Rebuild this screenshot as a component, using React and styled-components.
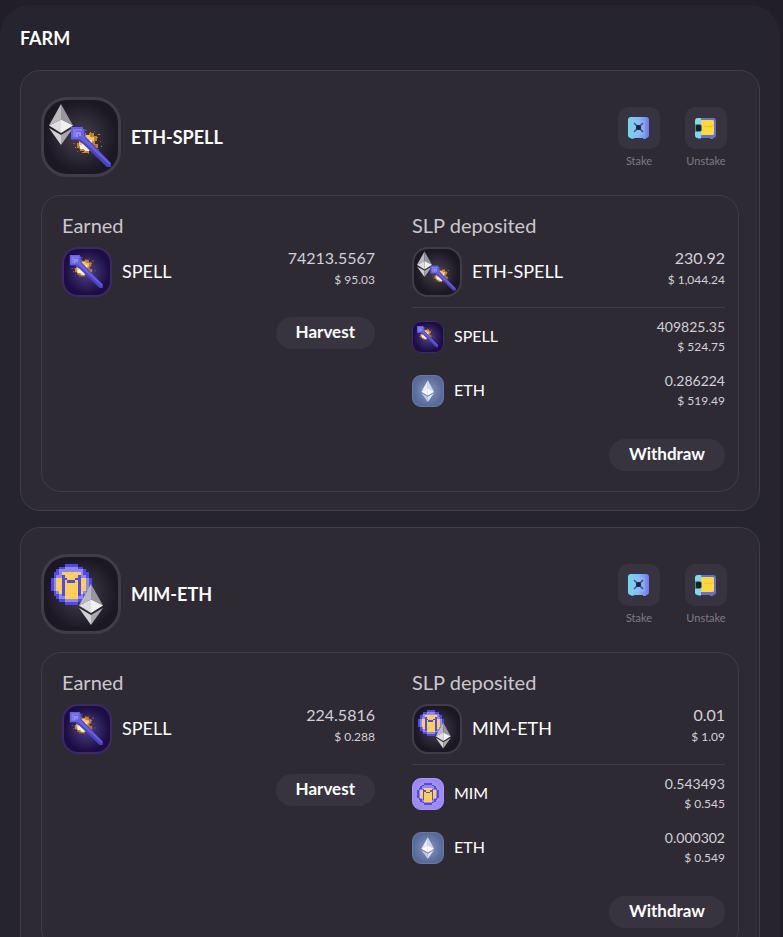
import React from "react";
import styled, { createGlobalStyle } from "styled-components";

const GlobalStyle = createGlobalStyle`
  *, *::before, *::after { box-sizing: border-box; }
  body {
    margin: 0;
    background: #211e28;
    color: #fff;
    font-family: Lato, "Noto Sans", sans-serif;
  }
  button { font: inherit; color: inherit; border: 0; cursor: pointer; }
  h1, h2, h3, ul { margin: 0; padding: 0; }
`;

const Panel = styled.main`
  margin: 5px 3px 0 0;
  padding: 20px;
  border-radius: 30px;
  background: #26242e;
`;

const PageTitle = styled.h1`
  font-size: 18px;
  line-height: 26px;
  font-weight: 700;
`;

const FarmList = styled.div`
  display: flex;
  flex-direction: column;
  gap: 16px;
  margin-top: 19px;
`;

const Card = styled.section`
  padding: 26px 20px 18px;
  border: 1px solid #403d48;
  border-radius: 20px;
  background: #2d2a34;
`;

const CardHeader = styled.header`
  display: flex;
  align-items: center;
  gap: 10px;
  padding-right: 12px;
  margin-bottom: 18px;
`;

const FarmName = styled.h2`
  flex: 1;
  font-size: 18px;
  line-height: 24px;
  font-weight: 700;
`;

const Actions = styled.div`
  display: flex;
  gap: 25px;
`;

const ActionButton = styled.button`
  display: flex;
  flex-direction: column;
  align-items: center;
  gap: 6px;
  width: 42px;
  padding: 0;
  background: none;
  color: #7d7a85;
  font-size: 11px;
  line-height: 12px;
`;

const ActionTile = styled.span`
  display: grid;
  place-items: center;
  width: 42px;
  height: 42px;
  border-radius: 10px;
  background: #37343f;
`;

const Details = styled.div`
  display: grid;
  grid-template-columns: 1fr 1fr;
  column-gap: 37px;
  padding: 17px 13px 20px 20px;
  border: 1px solid #403d48;
  border-radius: 20px;
`;

const Column = styled.div`
  display: flex;
  flex-direction: column;
`;

const ColumnTitle = styled.h3`
  margin-bottom: 10px;
  font-size: 20px;
  line-height: 24px;
  font-weight: 400;
  color: #c9c8cc;
`;

const Row = styled.div`
  display: flex;
  align-items: center;
  gap: 10px;
  height: ${(p) => (p.$small ? 32 : 50)}px;
`;

const TokenName = styled.span`
  flex: 1;
  padding-bottom: 2px;
  font-size: ${(p) => (p.$small ? 16 : 18)}px;
  line-height: 24px;
`;

const Amount = styled.span`
  display: flex;
  flex-direction: column;
  align-items: flex-end;
  padding-bottom: ${(p) => (p.$small ? 0 : 6)}px;
  color: #d2d1d5;
  font-size: ${(p) => (p.$small ? 14 : 16)}px;
  line-height: ${(p) => (p.$small ? 20 : 22)}px;
`;

const Fiat = styled.small`
  font-size: 12px;
`;

const Tokens = styled.div`
  display: flex;
  flex-direction: column;
  gap: 22px;
  margin: 10px 0 12px;
  padding-top: 13px;
  border-top: 1px solid #403d48;
`;

const PillButton = styled.button`
  align-self: flex-end;
  height: 32px;
  margin-top: 20px;
  padding: 0 20px 2px;
  border-radius: 16px;
  background: #37343f;
  font-size: 17px;
  font-weight: 700;
  line-height: 30px;
`;

const themes = {
  pair: ["#45424f", "#1b1823", "#403d49"],
  spell: ["#4c4286", "#1c0d43", "#3b2a66"],
  eth: ["#8998c1", "#596b9b", "#6678a6"],
  mim: ["#c0b5fb", "#9d88f5", "#aa98f7"],
};

const Badge = styled.svg`
  flex: none;
  width: ${(p) => p.$size}px;
  height: ${(p) => p.$size}px;
  border: ${(p) => p.$edge}px solid ${(p) => themes[p.$kind][2]};
  border-radius: ${(p) => p.$radius}px;
  background: radial-gradient(
    circle,
    ${(p) => themes[p.$kind][0]},
    ${(p) => themes[p.$kind][1]} 68%
  );
`;

function EthMark({ transform, light }) {
  const c = light
    ? ["#d2daf1", "#fff", "#fff", "#dbe2f5", "#c2cce8"]
    : ["#d6d5d9", "#dedde1", "#f1f1f2", "#a9a8ad", "#d2d1d5"];
  return (
    <g transform={transform}>
      <path d="M20 7 8 28.5l12-6Z" fill={light ? "#e8edfb" : "#bbb9be"} />
      <path d="m20 7 12 21.500-12-6Z" fill={light ? c[0] : "#98969d"} />
      <path d="m8 28.500 12-6v13.500Z" fill={c[1]} />
      <path d="m32 28.500-12-6v13.500Z" fill={c[2]} />
      <path d="m8 31 12 7v10Z" fill={c[4]} />
      <path d="m32 31-12 7v10Z" fill={c[3]} />
    </g>
  );
}

const sparks = [
  [44, 33], [49, 35], [53, 34], [57, 37], [59, 44], [60, 49], [56, 52],
  [52, 55], [47, 56], [41, 55], [36, 54], [34, 50], [32, 46], [36, 46],
  [38, 51], [55, 40], [54, 48], [43, 53],
];

function WandMark({ transform }) {
  return (
    <g transform={transform}>
      <path
        d="M39 40h3v-4h3v2h3v-2h5v3h3v5h-2v3h3v4h-4v3h-5v2h-5v-2h-4v-3h-3v-5h3Z"
        fill="#c4812c"
      />
      <path
        d="M41 39h4v-1h4v2h4v4h-2v6h2v3h-5v1h-4v-2h-4v-3h-2v-5h3Z"
        fill="#ffc55b"
      />
      <path d="M41 41h6v2h4v9h-3v2h-5v-2h-4v-4h2Z" fill="#fff4dc" />
      {sparks.map(([x, y], i) => (
        <rect
          key={i}
          x={x}
          y={y}
          width={i % 3 ? 1 : 2}
          height="1"
          fill={i % 2 ? "#cc872d" : "#8c5a2b"}
        />
      ))}
      <path d="M30 30h12v2h2v7l3 3 23 24v4h-4L42 47l-3-2-2-2h-7Z" fill="#4a43c2" />
      <path d="M30 30h12v2h1v7l2 3 24 24v2L43 45l-4-3h-9Z" fill="#6660e4" />
      <path d="M32 32h9v2h-6v6h-3Z" fill="#7f7af2" />
      <path d="M35 35h5v4h-2v-2h-1v3h-2Z" fill="#938ff5" />
    </g>
  );
}

const mimRows = [
  ".....BBBBB.....",
  "...BBLLLLLBB...",
  "..BLLLLLLLLLB..",
  ".BBLYYYYYYYLBB.",
  ".BLLBYYYYYBLLB.",
  "BLYYBBYYYBBYYLB",
  "BLYYBYBBBYBYYLB",
  "BLYYBYYYYYBYYLB",
  "BLYYBYYYYYBYYLB",
  "BLYYBYYYYYBYYLB",
  ".BLYBYYYYYBYLB.",
  ".BBLBYYYYYBLBB.",
  "..BLLYYYYYLLB..",
  "...BBLLLLLBB...",
  ".....BBBBB.....",
];
const mimColors = { B: "#5148f5", L: "#8e89f2", Y: "#ffcf56" };

function MimMark({ transform }) {
  return (
    <g transform={transform}>
      {mimRows.flatMap((row, y) =>
        [...row].map((cell, x) =>
          cell === "." ? null : (
            <rect
              key={`${x}-${y}`}
              x={x}
              y={y}
              width="1"
              height="1"
              fill={mimColors[cell]}
              shapeRendering="crispEdges"
            />
          )
        )
      )}
    </g>
  );
}

const marks = {
  "ETH-SPELL": (
    <>
      <EthMark />
      <WandMark />
    </>
  ),
  "MIM-ETH": (
    <>
      <MimMark transform="translate(10 10) scale(2.7)" />
      <EthMark transform="translate(30 23)" />
    </>
  ),
  SPELL: <WandMark transform="translate(-27 -27) scale(1.32)" />,
  ETH: <EthMark light transform="translate(13 4) scale(1.32)" />,
  MIM: <MimMark transform="translate(13 13) scale(3.6)" />,
};
const kinds = { SPELL: "spell", ETH: "eth", MIM: "mim" };

function TokenIcon({ name, size }) {
  const edge = size === 80 ? 3 : size === 50 ? 2 : 1;
  const inset = (edge * 80) / size;
  return (
    <Badge
      $kind={kinds[name] || "pair"}
      $size={size}
      $edge={edge}
      $radius={size === 80 ? 26 : size === 50 ? 16 : 9}
      viewBox={`${inset} ${inset} ${80 - inset * 2} ${80 - inset * 2}`}
      aria-hidden="true"
    >
      {marks[name]}
    </Badge>
  );
}

function StakeIcon() {
  return (
    <svg width="22" height="22" viewBox="0 0 22 22" aria-hidden="true">
      <defs>
        <linearGradient id="safe">
          <stop stopColor="#72d9ed" />
          <stop offset=".5" stopColor="#83b9f5" />
          <stop offset="1" stopColor="#7379ee" />
        </linearGradient>
      </defs>
      <path d="M2 19h4v3H3Zm13 0h4l-1 3h-3Z" fill="#5a9fd0" />
      <rect x="0" y="0" width="21" height="21" rx="3" fill="url(#safe)" />
      <rect x="4" y="3" width="13" height="15" rx="1" fill="#9bc9ff" opacity=".3" />
      <path d="m6 6 9 9m0-9-9 9" stroke="#3d5283" strokeWidth="1.500" />
      <rect x="8" y="8" width="5" height="5" rx="2" fill="#1d2438" />
    </svg>
  );
}

function UnstakeIcon() {
  return (
    <svg width="22" height="22" viewBox="0 0 22 22" aria-hidden="true">
      <path d="M2 19h4v3H3Zm13 0h4l-1 3h-3Z" fill="#5e77cd" />
      <rect x="0" y="1" width="21" height="20" rx="3" fill="#6570d3" />
      <path d="M0 4q0-3 3-3h3v20H3q-3 0-3-3Z" fill="#7cdbec" />
      <path d="M6 3h12l1 1v13l-1 1H6Z" fill="#ffd93b" />
      <path d="m9 10 4-1 2 1 4-2" fill="none" stroke="#f5bd2e" strokeWidth="1" />
      <rect x="-1" y="7" width="8" height="8" rx="3" fill="#54808f" />
      <rect x="1" y="8" width="5" height="6" rx="1" fill="#15202c" />
    </svg>
  );
}

function AssetRow({ name, amount, fiat, small }) {
  return (
    <Row $small={small}>
      <TokenIcon name={name} size={small ? 32 : 50} />
      <TokenName $small={small}>{name}</TokenName>
      <Amount $small={small}>
        {amount}
        <Fiat>$ {fiat}</Fiat>
      </Amount>
    </Row>
  );
}

function FarmCard({ farm }) {
  return (
    <Card>
      <CardHeader>
        <TokenIcon name={farm.name} size={80} />
        <FarmName>{farm.name}</FarmName>
        <Actions>
          <ActionButton type="button">
            <ActionTile>
              <StakeIcon />
            </ActionTile>
            Stake
          </ActionButton>
          <ActionButton type="button">
            <ActionTile>
              <UnstakeIcon />
            </ActionTile>
            Unstake
          </ActionButton>
        </Actions>
      </CardHeader>
      <Details>
        <Column>
          <ColumnTitle>Earned</ColumnTitle>
          <AssetRow {...farm.earned} />
          <PillButton type="button">Harvest</PillButton>
        </Column>
        <Column>
          <ColumnTitle>SLP deposited</ColumnTitle>
          <AssetRow {...farm.deposit} />
          <Tokens>
            {farm.tokens.map((token) => (
              <AssetRow key={token.name} small {...token} />
            ))}
          </Tokens>
          <PillButton type="button">Withdraw</PillButton>
        </Column>
      </Details>
    </Card>
  );
}

const farms = [
  {
    name: "ETH-SPELL",
    earned: { name: "SPELL", amount: "74213.5567", fiat: "95.03" },
    deposit: { name: "ETH-SPELL", amount: "230.92", fiat: "1,044.24" },
    tokens: [
      { name: "SPELL", amount: "409825.35", fiat: "524.75" },
      { name: "ETH", amount: "0.286224", fiat: "519.49" },
    ],
  },
  {
    name: "MIM-ETH",
    earned: { name: "SPELL", amount: "224.5816", fiat: "0.288" },
    deposit: { name: "MIM-ETH", amount: "0.01", fiat: "1.09" },
    tokens: [
      { name: "MIM", amount: "0.543493", fiat: "0.545" },
      { name: "ETH", amount: "0.000302", fiat: "0.549" },
    ],
  },
];

export default function App() {
  return (
    <>
      <GlobalStyle />
      <Panel>
        <PageTitle>FARM</PageTitle>
        <FarmList>
          {farms.map((farm) => (
            <FarmCard key={farm.name} farm={farm} />
          ))}
        </FarmList>
      </Panel>
    </>
  );
}
